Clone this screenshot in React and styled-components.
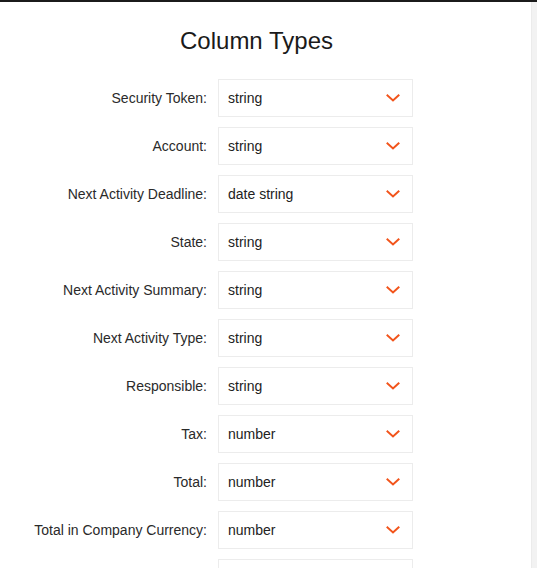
import React from 'react';
import styled, { createGlobalStyle } from 'styled-components';

const GlobalStyle = createGlobalStyle`
  html, body {
    margin: 0;
    padding: 0;
    background: #fff;
  }
  body {
    font-family: "Liberation Sans", Arial, sans-serif;
    color: #222;
  }
`;

const Page = styled.div`
  display: flex;
  border-top: 2px solid #1b1b1b;
  min-height: 566px;
`;

const Panel = styled.div`
  width: 531px;
  padding-top: 25px;
  padding-bottom: 20px;
`;

const Scrollbar = styled.div`
  width: 6px;
  background: #f2f2f2;
  border-left: 1px solid #ebebeb;
  box-sizing: border-box;
`;

const Title = styled.h2`
  width: 513px;
  margin: 0 0 24px;
  text-align: center;
  font-size: 24px;
  line-height: 28px;
  font-weight: 400;
  color: #1a1a1a;
`;

const List = styled.div`
  display: flex;
  flex-direction: column;
  gap: 10px;
`;

const Row = styled.div`
  display: flex;
  align-items: center;
`;

const Label = styled.label`
  width: 207px;
  margin-right: 11px;
  text-align: right;
  font-size: 14px;
  color: #2a2a2a;
  white-space: nowrap;
`;

const Select = styled.div`
  width: 195px;
  height: 38px;
  box-sizing: border-box;
  border: 1px solid #ececec;
  display: flex;
  align-items: center;
  justify-content: space-between;
  padding: 0 12px 0 9px;
  font-size: 14px;
  color: #222;
`;

const Chevron = () => (
  <svg width="14" height="8" viewBox="0 0 14 8">
    <polyline points="1.5,1.5 7,6.5 12.5,1.5" fill="none" stroke="#f2541b" strokeWidth="2" strokeLinecap="square" />
  </svg>
);

const columns = [
  ['Security Token', 'string'],
  ['Account', 'string'],
  ['Next Activity Deadline', 'date string'],
  ['State', 'string'],
  ['Next Activity Summary', 'string'],
  ['Next Activity Type', 'string'],
  ['Responsible', 'string'],
  ['Tax', 'number'],
  ['Total', 'number'],
  ['Total in Company Currency', 'number'],
  ['Untaxed Amount', 'number'],
];

export default function App() {
  return (
    <>
      <GlobalStyle />
      <Page>
        <Panel>
          <Title>Column Types</Title>
          <List>
            {columns.map(([name, type]) => (
              <Row key={name}>
                <Label>{name}:</Label>
                <Select>
                  <span>{type}</span>
                  <Chevron />
                </Select>
              </Row>
            ))}
          </List>
        </Panel>
        <Scrollbar />
      </Page>
    </>
  );
}
